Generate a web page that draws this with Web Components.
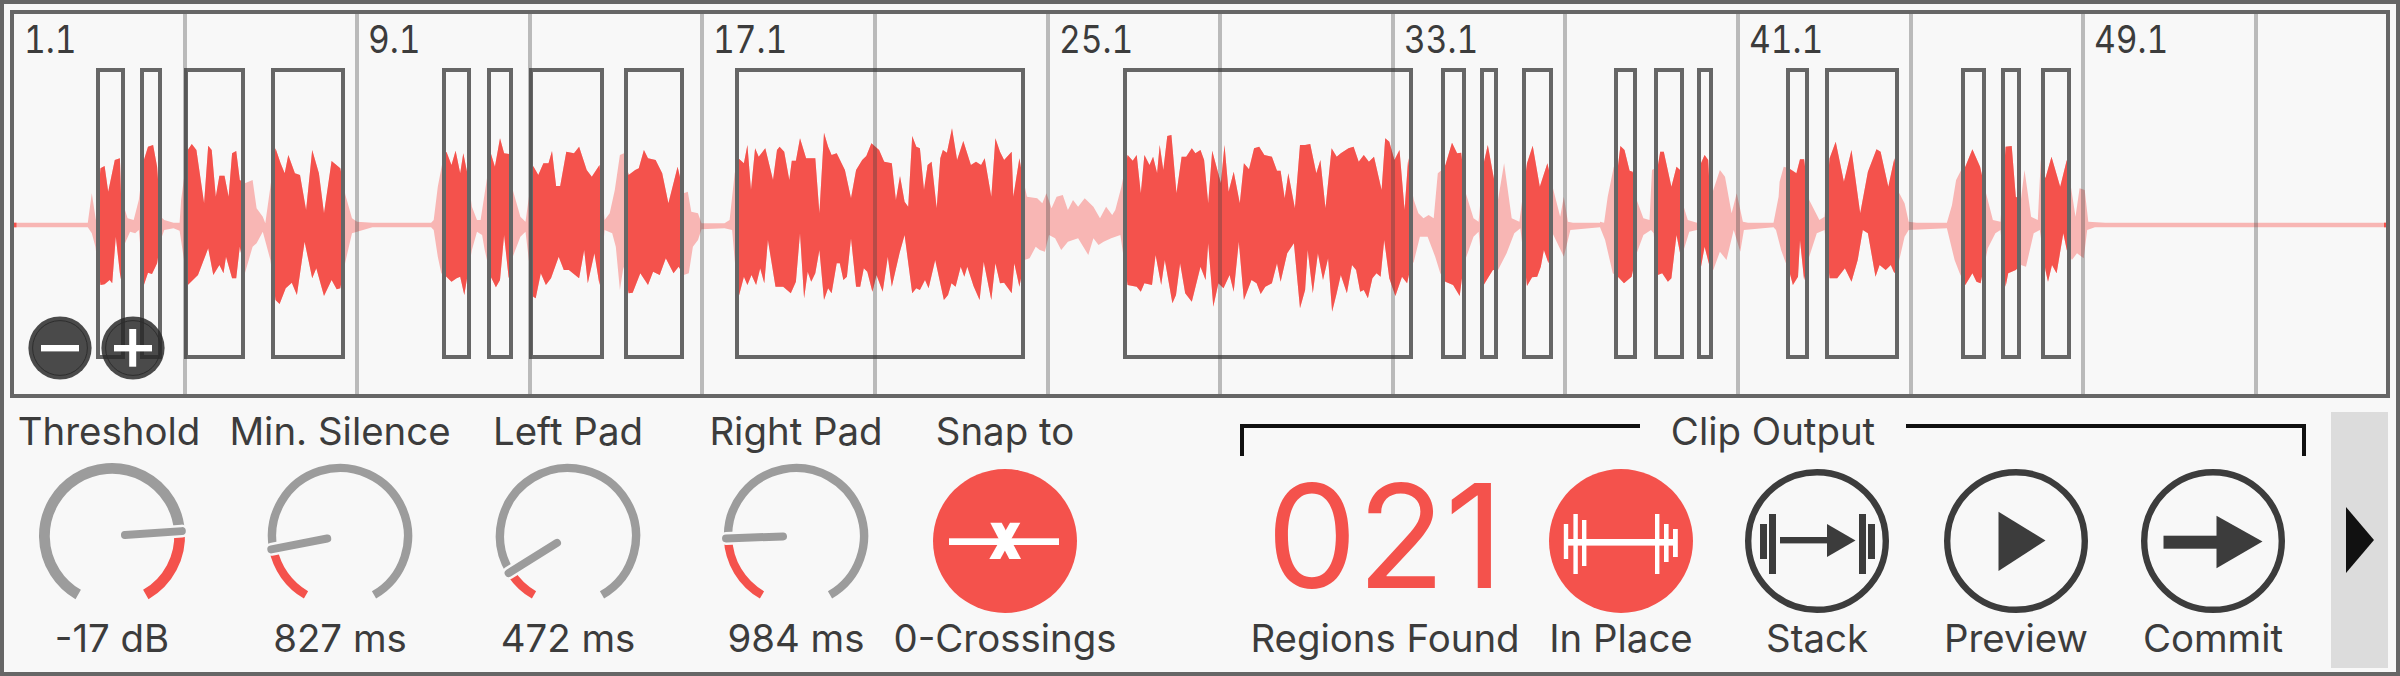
<!DOCTYPE html>
<html>
<head>
<meta charset="utf-8">
<title>Region Slicer</title>
<style>
  html, body { margin: 0; padding: 0; background: #f8f8f8; }
</style>
</head>
<body>
<slice-editor>
  <wave-view slot="wave"></wave-view>

  <param-cell label="Threshold" value="-17 dB" width="216" nudge="-6"><rotary-knob angle="86" side="end" thick></rotary-knob></param-cell>
  <param-cell label="Min. Silence" value="827 ms" width="240"><rotary-knob angle="259" side="start"></rotary-knob></param-cell>
  <param-cell label="Left Pad" value="472 ms" width="216"><rotary-knob angle="238" side="start"></rotary-knob></param-cell>
  <param-cell label="Right Pad" value="984 ms" width="180" style="margin-left:30px"><rotary-knob angle="268" side="start"></rotary-knob></param-cell>
  <param-cell label="Snap to" value="0-Crossings" width="230" style="margin-left:4px"><round-icon kind="snap" active></round-icon></param-cell>

  <output-group label="Clip Output">
    <param-cell value="Regions Found" width="290" bare><big-count>021</big-count></param-cell>
    <param-cell value="In Place" width="182" bare><round-icon kind="inplace" active></round-icon></param-cell>
    <param-cell value="Stack" width="210" bare><round-icon kind="stack"></round-icon></param-cell>
    <param-cell value="Preview" width="188" bare><round-icon kind="play"></round-icon></param-cell>
    <param-cell value="Commit" width="206" bare><round-icon kind="commit"></round-icon></param-cell>
  </output-group>

  <side-toggle></side-toggle>
</slice-editor>

<script>
const RED = '#f4524c';
const INK = '#3c3c3c';

// envelope traced off the reference, one block per 800px of width.
// x is stretched 1.96, y is stretched 3 in these numbers
const WAVE_TOP = [
  [0, `14,668 172,668 180,580 188,660 197,505 205,498 212,575 225,480 235,475 238,620 245,630 250,655 262,660 272,600 282,480 290,440 300,435 308,500 315,650 322,660 340,668 352,668 355,600 368,450 376,432 385,450 400,610 408,437 415,450 423,590 430,527 440,527 448,590 455,460 463,453 470,540 480,550 495,540 503,625 515,650 520,670 530,560 540,445 550,490 558,520 565,465 578,520 588,525 600,630 612,450 625,520 635,640 650,483 667,505 677,585 690,655 700,665 730,668 845,668 850,660 858,560 868,480 875,455 885,495 893,452 902,520 908,460 916,520 925,620 935,660 942,660 950,580 962,460 970,500 980,415 988,460 998,462 1005,570 1020,650 1030,665 1045,498 1055,525 1065,490 1075,490 1082,453 1090,558 1098,558 1110,455 1125,460 1135,440 1150,510 1160,530 1175,495 1185,660 1195,640 1205,570 1215,465 1223,460 1232,525 1245,510 1252,505 1262,450 1270,475 1285,480 1298,520 1310,610 1328,500 1340,580 1348,575 1355,635 1368,640 1375,670 1420,670 1430,660 1440,520 1447,475 1458,490 1465,435 1472,570 1480,445 1487,470 1500,445 1515,540 1523,450 1528,440 1537,455 1547,540 1552,482 1560,482`],
  [800, `0,415 12,475 20,475 30,475 38,640 47,398 55,440 62,465 72,460 88,510 100,595 110,510 122,480 130,468 140,430 155,450 165,485 180,490 188,600 196,528 205,605 212,620 220,408 228,440 235,445 243,570 250,495 258,485 268,625 275,475 280,450 288,458 298,385 308,480 320,423 335,495 345,485 355,495 362,475 375,590 383,415 392,455 400,480 415,455 418,590 430,475 435,520 445,590 465,595 475,610 483,580 493,625 503,590 515,585 525,630 535,600 545,620 558,595 575,620 588,655 600,620 612,645 618,630 630,560 642,465 652,482 660,465 668,580 675,465 685,495 692,470 700,520 705,435 712,510 720,408 728,405 738,580 748,470 757,470 768,445 775,460 785,450 792,480 800,610 808,452 825,550 832,435 840,575 850,515 862,610 870,490 880,508 890,445 900,440 910,465 925,470 935,512 942,512 950,595 957,520 970,625 980,435 990,435 1000,432 1012,520 1020,480 1030,625 1042,445 1052,470 1060,460 1075,445 1085,440 1095,485 1105,465 1115,485 1125,470 1140,570 1147,415 1155,425 1165,480 1175,450 1185,630 1192,475 1197,550 1203,600 1212,640 1222,655 1232,645 1242,655 1250,520 1258,510 1265,495 1278,428 1288,460 1296,458 1305,580 1320,655 1330,665 1340,490 1348,435 1358,520 1368,600 1380,490 1395,655 1410,665 1425,490 1436,437 1450,560 1465,490 1475,560 1490,650 1497,590 1505,665 1515,668 1568,668`],
  [1600, `0,665 8,668 15,590 27,500 35,500 40,438 48,450 58,512 64,515 72,600 85,655 97,660 102,510 113,500 118,455 125,455 140,560 150,500 157,510 164,620 172,660 190,668 198,490 205,465 212,480 216,600 222,570 235,510 245,530 258,640 268,580 280,665 290,668 340,668 350,590 352,545 360,500 370,505 385,520 392,478 400,478 410,600 430,660 440,650 450,475 462,425 478,545 493,450 510,640 525,515 542,448 550,455 565,560 577,475 585,575 597,610 605,665 620,668 680,668 690,615 698,540 708,510 716,500 730,448 745,500 755,570 770,660 785,665 795,440 807,438 815,590 825,600 832,510 845,650 858,660 864,480 873,535 885,470 902,560 915,480 924,570 932,650 940,565 950,570 957,665 990,668 1542,668`]
];
const WAVE_BOT = [
  [0, `14,682 172,682 180,700 187,740 197,855 205,853 215,840 220,850 227,710 235,820 238,845 245,730 255,695 265,700 272,690 282,855 290,818 298,822 308,790 315,720 322,690 340,685 352,692 368,855 378,840 388,825 408,745 418,825 430,795 438,820 443,770 455,835 463,835 470,740 480,820 495,740 503,730 515,695 530,780 540,900 548,912 560,865 572,848 582,885 597,725 612,835 620,805 635,888 650,840 660,868 667,865 677,785 690,700 700,695 730,682 845,682 850,690 858,770 865,820 875,830 885,845 895,835 902,830 910,885 916,830 925,750 935,695 945,705 950,750 962,830 972,862 980,840 988,705 997,835 1005,770 1020,710 1030,695 1045,890 1050,895 1060,820 1070,855 1080,835 1095,770 1105,810 1115,810 1135,835 1145,750 1152,850 1165,760 1175,855 1185,690 1200,700 1207,740 1215,870 1222,800 1232,880 1240,878 1255,820 1270,855 1280,815 1293,825 1305,775 1320,820 1330,800 1340,825 1350,820 1358,740 1368,720 1375,688 1420,685 1435,690 1440,780 1447,895 1458,830 1465,855 1473,825 1482,855 1490,805 1498,850 1505,720 1520,860 1535,860 1550,880 1560,845`],
  [800, `0,700 8,895 15,815 22,845 30,820 38,750 47,900 55,865 62,880 72,790 78,790 85,840 92,830 100,715 110,860 118,860 125,805 132,815 142,875 150,825 162,875 172,770 180,860 195,760 205,705 220,880 228,865 235,870 245,840 252,865 265,780 282,900 290,885 297,850 305,860 315,800 322,830 328,800 340,858 352,900 360,785 375,900 383,790 392,850 400,848 415,880 420,790 430,860 440,780 450,775 462,740 470,750 480,755 488,705 500,715 512,750 525,725 545,715 565,765 575,715 585,735 595,725 610,715 628,705 642,855 660,860 668,875 675,850 690,855 697,765 708,855 715,780 730,910 737,885 745,790 755,880 768,905 785,800 795,840 800,730 810,920 820,850 830,865 842,825 850,875 860,725 870,900 885,840 895,850 903,882 912,860 925,850 935,790 942,845 955,760 968,730 980,925 990,870 995,750 1005,880 1015,760 1025,840 1035,775 1043,935 1052,880 1060,825 1072,880 1082,795 1090,810 1098,875 1105,870 1113,895 1122,835 1130,820 1138,830 1145,720 1155,835 1167,888 1180,830 1190,850 1197,800 1203,785 1215,710 1230,710 1245,770 1255,820 1265,845 1280,855 1293,888 1297,840 1305,775 1320,710 1330,695 1340,855 1348,835 1358,810 1368,810 1385,760 1400,700 1412,685 1425,858 1435,832 1445,830 1452,800 1458,750 1467,790 1475,700 1497,770 1510,690 1568,682`],
  [1600, `0,682 10,720 25,820 35,830 47,850 62,830 72,760 85,705 100,690 105,700 113,825 122,820 133,845 140,835 150,705 157,760 162,760 175,695 190,690 198,800 205,740 215,800 222,810 235,755 248,780 262,690 275,755 282,690 340,682 345,690 355,750 362,780 372,820 378,855 388,830 392,720 400,840 410,770 425,700 440,690 450,835 465,835 480,805 493,845 505,780 515,690 525,700 540,830 548,795 560,810 570,795 577,820 585,790 597,710 605,690 680,685 695,780 705,820 716,855 730,820 738,845 746,850 760,745 775,700 785,690 795,860 800,820 815,810 825,795 835,800 850,700 862,690 873,810 878,845 886,795 895,820 908,700 915,750 925,780 935,760 948,775 955,690 970,682 1542,682`]
];

// outer left/right of each detected region
const REGIONS = [
  [96, 125], [140, 162], [184, 245], [271, 345], [442, 471], [487, 513], [529, 604],
  [624, 684], [735, 1025], [1123, 1413], [1441, 1466], [1480, 1498], [1522, 1553],
  [1614, 1637], [1654, 1684], [1697, 1713], [1786, 1809], [1825, 1899], [1961, 1986],
  [2001, 2021], [2041, 2071]
];

function tracePoints(blocks) {
  const out = [];
  for (const [offset, text] of blocks) {
    for (const pair of text.split(' ')) {
      const [x, y] = pair.split(',').map(Number);
      out.push((offset + x / 1.96).toFixed(1) + ',' + (y / 3).toFixed(1));
    }
  }
  return out;
}

function polar(cx, cy, r, deg) {
  const a = (deg - 90) * Math.PI / 180;
  return [cx + r * Math.cos(a), cy + r * Math.sin(a)];
}

function arcPath(cx, cy, r, from, to) {
  const [x1, y1] = polar(cx, cy, r, from);
  const [x2, y2] = polar(cx, cy, r, to);
  const large = to - from > 180 ? 1 : 0;
  return `M${x1.toFixed(2)} ${y1.toFixed(2)}A${r} ${r} 0 ${large} 1 ${x2.toFixed(2)} ${y2.toFixed(2)}`;
}

class SliceEditor extends HTMLElement {
  constructor() {
    super();
    this.attachShadow({ mode: 'open' });
    this.shadowRoot.innerHTML = `
      <style>
        :host {
          display: flex;
          flex-direction: column;
          box-sizing: border-box;
          width: 2400px;
          height: 676px;
          padding: 6px 6px 0;
          border: 4px solid #666;
          background: #f8f8f8;
          color: ${INK};
          font-family: Inter, "Liberation Sans", sans-serif;
        }
        .controls {
          display: flex;
          align-items: flex-start;
          margin: 11px -6px 0;
        }
      </style>
      <slot name="wave"></slot>
      <div class="controls"><slot></slot></div>
    `;
  }
}

class WaveView extends HTMLElement {
  constructor() {
    super();
    this.attachShadow({ mode: 'open' });
    const top = tracePoints(WAVE_TOP);
    const bot = tracePoints(WAVE_BOT).reverse();
    const shape = 'M' + top.concat(bot).join('L') + 'Z';
    const clips = REGIONS.map(([a, b]) => `<rect x="${a + 4}" y="72" width="${b - a - 8}" height="283"/>`).join('');
    const boxes = REGIONS.map(([a, b]) => `<rect x="${a + 2}" y="70" width="${b - a - 4}" height="287"/>`).join('');
    let bars = '';
    for (let i = 0; i < 13; i++) {
      const text = i % 2 === 0 ? `<span>${i * 4 + 1}.1</span>` : '';
      bars += `<div class="bar">${text}</div>`;
    }
    this.shadowRoot.innerHTML = `
      <style>
        :host {
          display: block;
          position: relative;
          box-sizing: border-box;
          width: 2380px;
          height: 388px;
          border: 4px solid #666;
          overflow: hidden;
        }
        svg { display: block; }
        .ruler {
          position: absolute;
          inset: 0;
          display: flex;
        }
        .bar {
          flex: 0 0 172.6px;
          box-sizing: border-box;
          padding: 3px 0 0 9px;
          border-right: 4px solid rgba(60, 60, 60, 0.33);
          font-size: 38.4px;
          line-height: 44px;
          font-variant-numeric: tabular-nums;
        }
        .bar:first-child { padding-left: 10px; }
        /* the bar numbers run narrower than the labels below */
        .bar span {
          display: inline-block;
          transform: scaleX(0.875);
          transform-origin: left center;
        }
      </style>
      <svg width="2372" height="380" viewBox="14 14 2372 380">
        <defs><clipPath id="hit">${clips}</clipPath></defs>
        <path d="${shape}" fill="#f8b6b4"/>
        <path d="${shape}" fill="${RED}" clip-path="url(#hit)"/>
        <rect x="14" y="222.7" width="2.5" height="4.6" fill="${RED}"/>
        <rect x="2384" y="222.7" width="2.5" height="4.6" fill="${RED}"/>
        <g fill="none" stroke="#666" stroke-width="4">${boxes}</g>
      </svg>
      <div class="ruler">${bars}</div>
      <zoom-button style="left:14px" kind="minus"></zoom-button>
      <zoom-button style="left:87px" kind="plus"></zoom-button>
    `;
  }
}

class ZoomButton extends HTMLElement {
  constructor() {
    super();
    this.attachShadow({ mode: 'open' });
    const vertical = this.getAttribute('kind') === 'plus'
      ? '<rect x="28.2" y="13" width="7" height="37.7" fill="#fff"/>' : '';
    this.shadowRoot.innerHTML = `
      <style>
        :host {
          position: absolute;
          top: 302px;
          width: 64px;
          height: 64px;
        }
        svg { display: block; }
      </style>
      <svg width="64" height="64" viewBox="0 0 64 64">
        <circle cx="32" cy="32" r="31.6" fill="rgba(40,40,40,0.835)"/>
        <circle cx="32" cy="32" r="27.4" fill="none" stroke="#2d2d2d" stroke-width="1"/>
        <rect x="13" y="29" width="38" height="6.4" fill="#fff"/>
        ${vertical}
      </svg>
    `;
  }
}

class ParamCell extends HTMLElement {
  constructor() {
    super();
    this.attachShadow({ mode: 'open' });
    const nudge = this.getAttribute('nudge') || 0;
    const label = this.hasAttribute('bare') ? '' : `<div class="text" style="margin-left:${nudge}px">${this.getAttribute('label')}</div>`;
    this.shadowRoot.innerHTML = `
      <style>
        :host {
          display: flex;
          flex-direction: column;
          align-items: center;
          flex: 0 0 ${this.getAttribute('width')}px;
          min-width: 0;
        }
        .text {
          height: 44px;
          font-size: 38.4px;
          line-height: 44px;
          white-space: nowrap;
        }
        .art {
          display: flex;
          justify-content: center;
          height: 163px;
        }
      </style>
      ${label}
      <div class="art"><slot></slot></div>
      <div class="text">${this.getAttribute('value')}</div>
    `;
  }
}

class RotaryKnob extends HTMLElement {
  constructor() {
    super();
    this.attachShadow({ mode: 'open' });
    const thick = this.hasAttribute('thick');
    const r = thick ? 67.6 : 68;
    const width = thick ? 10.8 : 8.4;
    const side = this.getAttribute('side');
    let angle = Number(this.getAttribute('angle'));
    if (angle < 210) angle += 360;
    const [cx, cy] = [80, 83];
    const before = side === 'start' ? RED : '#9c9c9c';
    const after = side === 'start' ? '#9c9c9c' : RED;
    const [x0, y0] = polar(cx, cy, 13, angle);
    const [x1, y1] = polar(cx, cy, 70, angle);
    const [x2, y2] = polar(cx, cy, 52, angle);
    this.shadowRoot.innerHTML = `
      <style>
        :host { display: block; width: 160px; height: 160px; }
        svg { display: block; }
      </style>
      <svg width="160" height="160" viewBox="0 0 160 160" fill="none">
        <path d="${arcPath(cx, cy, r, 210, angle)}" stroke="${before}" stroke-width="${width}"/>
        <path d="${arcPath(cx, cy, r, angle, 510)}" stroke="${after}" stroke-width="${width}"/>
        <line x1="${x2}" y1="${y2}" x2="${x1}" y2="${y1}" stroke="#f8f8f8" stroke-width="13" stroke-linecap="round"/>
        <line x1="${x0}" y1="${y0}" x2="${x1}" y2="${y1}" stroke="#9c9c9c" stroke-width="8" stroke-linecap="round"/>
      </svg>
    `;
  }
}

const ICONS = {
  snap: `<rect x="16" y="69.3" width="110" height="6.7"/>
    <path d="M57.3 53.7H68.7L88 90H76.3Z"/><path d="M77 53.7H87.3L67.3 90H56.3Z"/>`,
  inplace: `<rect x="19" y="70" width="109" height="6.6"/>
    <rect x="14.8" y="55" width="4.4" height="35"/><rect x="24.4" y="45" width="4.4" height="60"/><rect x="33" y="51" width="4.4" height="46"/>
    <rect x="106" y="45" width="4.4" height="60"/><rect x="115" y="55" width="4.6" height="38"/><rect x="124" y="60" width="4.8" height="28"/>`,
  stack: `<rect x="15" y="55" width="7" height="35"/><rect x="24" y="45" width="7" height="60"/>
    <rect x="35" y="68" width="48" height="6.4"/><path d="M82 55L110.5 71.5L82 88Z"/>
    <rect x="114" y="45" width="7" height="60"/><rect x="123" y="55" width="7" height="35"/>`,
  play: `<path d="M54.5 42.7L101.5 71.5L54.5 102Z"/>`,
  commit: `<rect x="22.5" y="66.7" width="53.5" height="13"/><path d="M75.5 46.7L121.5 72.5L75.5 99.3Z"/>`
};

class RoundIcon extends HTMLElement {
  constructor() {
    super();
    this.attachShadow({ mode: 'open' });
    const active = this.hasAttribute('active');
    const disc = active
      ? `<circle cx="72" cy="72" r="72" fill="${RED}"/>`
      : `<circle cx="72" cy="72" r="68.8" fill="none" stroke="${INK}" stroke-width="6.4"/>`;
    this.shadowRoot.innerHTML = `
      <style>
        :host { display: block; width: 144px; height: 144px; margin-top: 16px; }
        svg { display: block; }
      </style>
      <svg width="144" height="144" viewBox="0 0 144 144" fill="${active ? '#fff' : INK}">
        ${disc}
        ${ICONS[this.getAttribute('kind')]}
      </svg>
    `;
  }
}

class BigCount extends HTMLElement {
  constructor() {
    super();
    this.attachShadow({ mode: 'open' });
    this.shadowRoot.innerHTML = `
      <style>
        :host {
          display: block;
          height: 160px;
          font-size: 144px;
          line-height: 166px;
          color: ${RED};
        }
      </style>
      <slot></slot>
    `;
  }
}

class OutputGroup extends HTMLElement {
  constructor() {
    super();
    this.attachShadow({ mode: 'open' });
    this.shadowRoot.innerHTML = `
      <style>
        :host {
          display: block;
          flex: 0 0 1076px;
          margin-left: 120px;
        }
        .head {
          display: flex;
          height: 44px;
          margin-right: 10px;
          font-size: 38.4px;
          line-height: 44px;
        }
        .rule {
          flex: 1;
          box-sizing: border-box;
          height: 32px;
          margin-top: 15px;
          border-top: 4px solid #111;
        }
        .rule.left { border-left: 4px solid #111; }
        .rule.right { border-right: 4px solid #111; }
        .title { padding: 0 31px; white-space: nowrap; }
        .body { display: flex; }
      </style>
      <div class="head">
        <div class="rule left"></div>
        <div class="title">${this.getAttribute('label')}</div>
        <div class="rule right"></div>
      </div>
      <div class="body"><slot></slot></div>
    `;
  }
}

class SideToggle extends HTMLElement {
  constructor() {
    super();
    this.attachShadow({ mode: 'open' });
    this.shadowRoot.innerHTML = `
      <style>
        :host {
          display: flex;
          align-items: center;
          justify-content: center;
          flex: 0 0 57px;
          height: 256px;
          margin: 3px 0 0 15px;
          background: #dcdcdc;
        }
        svg { display: block; }
      </style>
      <svg width="28" height="66" viewBox="0 0 28 66"><path d="M0 0L28 33L0 66Z" fill="#111"/></svg>
    `;
  }
}

customElements.define('zoom-button', ZoomButton);
customElements.define('wave-view', WaveView);
customElements.define('rotary-knob', RotaryKnob);
customElements.define('round-icon', RoundIcon);
customElements.define('big-count', BigCount);
customElements.define('param-cell', ParamCell);
customElements.define('output-group', OutputGroup);
customElements.define('side-toggle', SideToggle);
customElements.define('slice-editor', SliceEditor);
</script>
</body>
</html>
